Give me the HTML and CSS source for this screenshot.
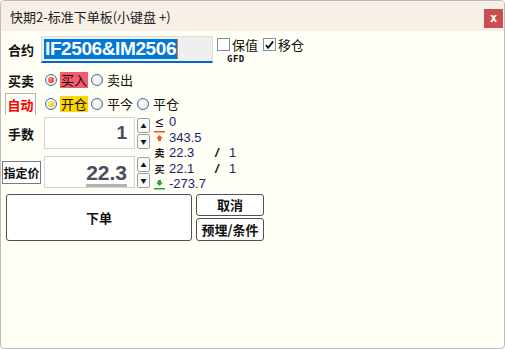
FILE: index.html
```html
<!DOCTYPE html>
<html lang="zh-CN">
<head>
  <meta charset="UTF-8" />
  <title>快期2-标准下单板</title>
  <link rel="stylesheet" href="styles.css">
</head>
<body>
  <div class="win">
    <div class="titlebar">
      <span class="title">快期2-标准下单板(小键盘 +)</span>
      <span class="close">x</span>
    </div>

    <div class="content">
      <div class="row row-contract">
        <span class="lbl">合约</span>
        <div class="contract-input"><span class="sel">IF2506&amp;IM2506</span></div>
        <div class="opts">
          <div class="checks">
            <span class="chk"></span><span class="chk-text">保值</span>
            <span class="chk chk-2"><svg width="12" height="12" viewBox="0 0 12 12"><path d="M2 6 L4.5 9 L10 2" fill="none" stroke="#111" stroke-width="2"/></svg></span><span class="chk-text">移仓</span>
          </div>
          <div class="gfd">GFD</div>
        </div>
      </div>

      <div class="row row-side">
        <span class="lbl">买卖</span>
        <span class="radio on-red"></span><span class="opt opt-buy">买入</span>
        <span class="radio"></span><span class="opt">卖出</span>
      </div>

      <div class="row row-offset">
        <span class="auto">自动</span>
        <span class="radio on-yellow"></span><span class="opt opt-open">开仓</span>
        <span class="radio"></span><span class="opt">平今</span>
        <span class="radio"></span><span class="opt">平仓</span>
      </div>

      <div class="spin-area">
        <div class="spin-rows">
          <div class="spin-row">
            <span class="lbl">手数</span>
            <div class="num-box"><span class="num num-qty">1</span></div>
            <div class="spinner"><span class="sp-btn">&#9650;</span><span class="sp-btn">&#9660;</span></div>
          </div>
          <div class="spin-row">
            <span class="price-lbl">指定价</span>
            <div class="num-box"><span class="num num-price">22.3</span></div>
            <div class="spinner"><span class="sp-btn">&#9650;</span><span class="sp-btn">&#9660;</span></div>
          </div>
        </div>

        <div class="info">
          <div class="info-row"><span class="ic ic-le">&le;</span><span class="val">0</span></div>
          <div class="info-row">
            <span class="ic"><svg width="11" height="12" viewBox="0 0 11 12"><rect x="0" y="0" width="11" height="1.5" fill="#e8501c"/><path d="M5.5 4 L9 7.5 L7 7.5 L7 10 L4 10 L4 7.5 L2 7.5 Z" fill="#f0601c"/></svg></span>
            <span class="val">343.5</span>
          </div>
          <div class="info-row"><span class="ic ic-ch">卖</span><span class="val">22.3</span><span class="slash">/</span><span class="val">1</span></div>
          <div class="info-row"><span class="ic ic-ch">买</span><span class="val">22.1</span><span class="slash">/</span><span class="val">1</span></div>
          <div class="info-row">
            <span class="ic"><svg width="11" height="12" viewBox="0 0 11 12"><path d="M5.5 8 L9 4.5 L7 4.5 L7 2 L4 2 L4 4.5 L2 4.5 Z" fill="#2ca02c"/><rect x="0" y="10" width="11" height="1.5" fill="#2ca02c"/></svg></span>
            <span class="val">-273.7</span>
          </div>
        </div>
      </div>

      <div class="actions">
        <button class="btn btn-order">下单</button>
        <div class="side-btns">
          <button class="btn btn-small">取消</button>
          <button class="btn btn-small">预埋/条件</button>
        </div>
      </div>
    </div>
  </div>
</body>
</html>
```

FILE: styles.css
```css
body {
  margin: 0;
  font-family: "Noto Sans CJK SC", "Liberation Sans", sans-serif;
  font-size: 13px;
  color: #111;
  background: #fffff5;
}
.win {
  box-sizing: border-box;
  width: 505px;
  height: 349px;
  border: 1px solid #bdbdbd;
  border-radius: 4px;
  background: #fffff5;
  overflow: hidden;
}
.titlebar {
  height: 30px;
  background: #f8f0e7;
  display: flex;
  align-items: center;
  justify-content: space-between;
  padding: 0 1px 0 9px;
}
.title {
  font-size: 13px;
  color: #222;
}
.close {
  width: 19px;
  height: 19px;
  margin-top: 4px;
  background: #c9504f;
  color: #fff;
  font: bold 12px "DejaVu Sans Mono", monospace;
  display: flex;
  align-items: center;
  justify-content: center;
}
.row {
  display: flex;
  align-items: center;
}
.lbl {
  box-sizing: border-box;
  width: 40px;
  padding-left: 7px;
  font-weight: bold;
  flex-shrink: 0;
}

/* contract */
.row-contract {
  margin-top: 5px;
  align-items: flex-start;
}
.row-contract .lbl {
  line-height: 27px;
}
.contract-input {
  box-sizing: border-box;
  width: 172px;
  height: 27px;
  background: #efefef;
  border: 1px solid #dcdcdc;
  border-bottom: 2px solid #0a64c8;
  padding: 2px 0 0 2px;
}
.sel {
  display: inline-block;
  background: #0078d7;
  color: #fff;
  font: bold 19px/20px "Liberation Sans", sans-serif;
  letter-spacing: -0.4px;
  padding: 0 1px;
  border-right: 1px solid #f07a20;
}
.opts {
  margin-left: 4px;
  margin-top: 1px;
}
.checks {
  display: flex;
  align-items: center;
}
.chk {
  box-sizing: border-box;
  width: 13px;
  height: 13px;
  border: 1px solid #7d8ea6;
  background: #fff;
  display: flex;
  align-items: center;
  justify-content: center;
}
.chk-2 {
  margin-left: 5px;
}
.chk-text {
  margin-left: 2px;
  line-height: 15px;
}
.gfd {
  margin: 2px 0 0 10px;
  font: bold 9px/10px "DejaVu Sans Mono", monospace;
  letter-spacing: 0.5px;
}

/* radios */
.row-side {
  margin-top: 6px;
  height: 20px;
}
.row-offset {
  margin-top: 3px;
  height: 22px;
}
.radio {
  box-sizing: border-box;
  width: 12px;
  height: 12px;
  border-radius: 50%;
  border: 1px solid #44689a;
  background: radial-gradient(circle at 40% 35%, #fff, #e4e4e4);
  margin-left: 3px;
  display: flex;
  align-items: center;
  justify-content: center;
  flex-shrink: 0;
}
.row-side .lbl + .radio {
  margin-left: 4px;
}
.on-red::after,
.on-yellow::after {
  content: "";
  width: 6px;
  height: 6px;
  border-radius: 50%;
}
.on-red::after {
  background: radial-gradient(circle at 35% 35%, #ff8a7a, #e01818);
}
.on-yellow::after {
  background: radial-gradient(circle at 35% 35%, #fff27a, #e0b400);
}
.opt {
  margin-left: 3px;
  padding: 0 1px;
  line-height: 16px;
}
.opt-buy {
  background: #f45b6c;
}
.opt-open {
  background: #ffd500;
}
.auto {
  box-sizing: border-box;
  width: 31px;
  height: 22px;
  margin-left: 4px;
  border: 1px solid #b4b4b4;
  border-bottom: none;
  color: #f00;
  font-weight: bold;
  text-align: center;
  line-height: 21px;
}
.auto + .radio {
  margin-left: 9px;
}

/* qty / price */
.spin-area {
  display: flex;
  height: 71px;
  margin-top: 2px;
}
.spin-rows {
  display: flex;
  flex-direction: column;
  gap: 7px;
}
.spin-row {
  display: flex;
  align-items: center;
  height: 32px;
}
.num-box {
  box-sizing: border-box;
  width: 91px;
  height: 32px;
  margin-left: 3px;
  background: #fffffb;
  border: 1px solid #d4d4d4;
  display: flex;
  justify-content: flex-end;
  align-items: center;
  padding-right: 7px;
}
.num {
  font-family: "Liberation Sans", sans-serif;
  font-weight: bold;
  color: #4b4c5c;
}
.num-qty {
  font-size: 19px;
}
.num-price {
  font-size: 21px;
  line-height: 22px;
  border-bottom: 3px solid #b4b4b4;
  margin-top: 4px;
}
.price-lbl {
  box-sizing: border-box;
  width: 39px;
  height: 23px;
  margin-left: 1px;
  border: 1px solid #7a7a7a;
  background: #fff;
  font-size: 12px;
  font-weight: bold;
  text-align: center;
  line-height: 21px;
  white-space: nowrap;
}
.spinner {
  margin-left: 2px;
  display: flex;
  flex-direction: column;
  gap: 1px;
}
.sp-btn {
  box-sizing: border-box;
  width: 13px;
  height: 15px;
  border: 1px solid #a0a0a0;
  border-radius: 2px;
  background: #f9f9f9;
  font-size: 6px;
  line-height: 13px;
  text-align: center;
  color: #111;
}
.info {
  margin: -3px 0 0 3px;
  font-family: "Liberation Sans", sans-serif;
  font-size: 13px;
}
.info-row {
  display: flex;
  align-items: center;
  height: 15.5px;
}
.ic {
  width: 13px;
  display: flex;
  justify-content: center;
  flex-shrink: 0;
}
.ic-le {
  font-size: 14px;
}
.ic-ch {
  font-family: "Noto Sans CJK SC", sans-serif;
  font-size: 10px;
  font-weight: bold;
}
.val {
  margin-left: 3px;
  min-width: 46px;
  color: #1d1d6b;
}
.val + .slash + .val {
  min-width: 0;
}
.slash {
  width: 11px;
  font-weight: bold;
  font-style: italic;
  color: #111;
}

/* buttons */
.actions {
  display: flex;
  margin: 6px 0 0 5px;
  gap: 4px;
}
.btn {
  box-sizing: border-box;
  border: 1px solid #505050;
  border-radius: 3px;
  background: #fff;
  font-family: "Noto Sans CJK SC", sans-serif;
  font-size: 13px;
  font-weight: bold;
  color: #111;
  padding: 0;
}
.btn-order {
  width: 186px;
  height: 47px;
}
.side-btns {
  display: flex;
  flex-direction: column;
  gap: 2px;
}
.btn-small {
  width: 68px;
  height: 22px;
  line-height: 18px;
}
.btn-small + .btn-small {
  height: 23px;
}
```
